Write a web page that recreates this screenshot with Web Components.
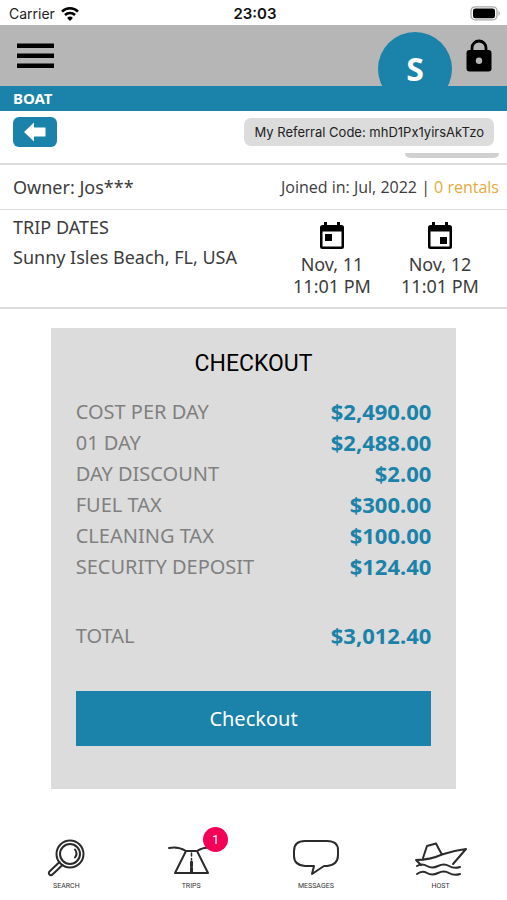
<!DOCTYPE html>
<html lang="en">
<head>
<meta charset="utf-8">
<meta name="viewport" content="width=device-width, initial-scale=1">
<title>Boat checkout</title>
<style>
    :root {
        --brand: #1b82a9;
        --bar: #b6b6b6;
        --panel: #dcdcdc;
        --line: #dddddd;
        --ink: #3c3c3c;
        --muted: #808080;
        --gold: #e5a93c;
        --alert: #f50057;
    }
    body {
        margin: 0;
        background: #fff;
        color: var(--ink);
        font-family: "Noto Sans", "Open Sans", sans-serif;
    }
    boat-app {
        min-height: 100vh;
    }
</style>
</head>
<body>
<boat-app>
    <status-bar slot="top" carrier="Carrier" time="23:03"></status-bar>
    <app-header slot="top" initial="S"></app-header>
    <page-title slot="top">BOAT</page-title>
    <referral-row code="mhD1Px1yirsAkTzo"></referral-row>
    <owner-row name="Jos***" joined="Jul, 2022" rentals="0 rentals"></owner-row>
    <trip-dates place="Sunny Isles Beach, FL, USA">
        <trip-day day="Nov, 11" time="11:01 PM"></trip-day>
        <trip-day day="Nov, 12" time="11:01 PM" end></trip-day>
    </trip-dates>
    <checkout-card></checkout-card>
    <tab-bar slot="bottom">
        <tab-item icon="search">SEARCH</tab-item>
        <tab-item icon="trips" badge="1">TRIPS</tab-item>
        <tab-item icon="messages">MESSAGES</tab-item>
        <tab-item icon="host">HOST</tab-item>
    </tab-bar>
</boat-app>

<script>
class BoatApp extends HTMLElement {
    constructor() {
        super();
        this.attachShadow({ mode: 'open' }).innerHTML = `
            <style>
                :host { display: flex; flex-direction: column; }
                main { flex: 1; }
            </style>
            <slot name="top"></slot>
            <main><slot></slot></main>
            <slot name="bottom"></slot>
        `;
    }
}

class StatusBar extends HTMLElement {
    connectedCallback() {
        this.attachShadow({ mode: 'open' }).innerHTML = `
            <style>
                :host {
                    display: grid;
                    grid-template-columns: 1fr auto 1fr;
                    align-items: center;
                    height: 25px;
                    padding: 2px 6px 0 9px;
                    box-sizing: border-box;
                    color: #222;
                    font: 14px/20px Inter, "Liberation Sans", sans-serif;
                }
                .left { display: flex; align-items: center; gap: 6px; }
                strong { font-size: 15px; font-weight: 600; color: #111; }
                .battery { justify-self: end; }
                svg { display: block; }
            </style>
            <span class="left">${this.getAttribute('carrier')}
                <svg width="18" height="14" viewBox="0 0 18 14" fill="none" stroke="#000" stroke-width="2.6">
                    <path d="M1 4.600a11.400 11.400 0 0 1 16 0M4 8a7.200 7.200 0 0 1 10 0"/>
                    <path d="M9 14 6.100 10.900a4.200 4.200 0 0 1 5.800 0z" fill="#000" stroke="none"/>
                </svg>
            </span>
            <strong>${this.getAttribute('time')}</strong>
            <svg class="battery" width="31" height="15" viewBox="0 0 31 15">
                <rect x="1" y=".8" width="26" height="13" rx="4" fill="#fff" stroke="#a8a8a8" stroke-width="1.300"/>
                <rect x="3" y="2.600" width="22" height="9.600" rx="2.300"/>
                <path d="M28.500 5v5c1.800-.8 1.800-4.200 0-5z" fill="#a8a8a8"/>
            </svg>
        `;
    }
}

class AppHeader extends HTMLElement {
    connectedCallback() {
        this.attachShadow({ mode: 'open' }).innerHTML = `
            <style>
                :host {
                    display: flex;
                    align-items: center;
                    justify-content: space-between;
                    height: 61px;
                    padding: 0 14px 0 16px;
                    position: relative;
                    background: var(--bar);
                }
                button { border: 0; padding: 0; background: none; font: inherit; }
                svg { display: block; }
                /* hangs over the title bar below */
                .avatar {
                    position: absolute;
                    top: 7px;
                    right: 55px;
                    width: 74px;
                    height: 74px;
                    border-radius: 50%;
                    background: var(--brand);
                    color: #fff;
                    font-size: 32px;
                    font-weight: 700;
                    line-height: 72px;
                }
            </style>
            <button aria-label="Menu">
                <svg width="38" height="28" viewBox="0 0 38 28"><path d="M1 1.500h37v4.500H1zM1 11.500h37v4.500H1zM1 21.500h37v4.500H1z"/></svg>
            </button>
            <button class="avatar" aria-label="Profile">${this.getAttribute('initial')}</button>
            <button aria-label="Lock">
                <svg width="28" height="34" viewBox="0 0 28 34">
                    <path d="M7 14V9a7 7 0 0 1 14 0V14" fill="none" stroke="#000" stroke-width="2.800"/>
                    <rect x="1.500" y="11" width="25" height="21.500" rx="3"/>
                    <circle cx="14" cy="21.800" r="3.200" fill="#b6b6b6"/>
                </svg>
            </button>
        `;
    }
}

class PageTitle extends HTMLElement {
    constructor() {
        super();
        this.attachShadow({ mode: 'open' }).innerHTML = `
            <style>
                :host { display: block; padding: 0 13px; background: var(--brand); color: #fff; }
                h1 { margin: 0; font-size: 15px; line-height: 25px; font-weight: 700; }
            </style>
            <h1><slot></slot></h1>
        `;
    }
}

class ReferralRow extends HTMLElement {
    connectedCallback() {
        this.attachShadow({ mode: 'open' }).innerHTML = `
            <style>
                :host { display: block; border-bottom: 2px solid var(--line); }
                .row {
                    display: flex;
                    justify-content: space-between;
                    align-items: center;
                    padding: 6px 13px 0;
                }
                .back {
                    display: grid;
                    place-items: center;
                    width: 44px;
                    height: 30px;
                    border: 0;
                    border-radius: 6px;
                    padding: 0;
                    background: var(--brand);
                }
                .code {
                    padding: 0 10px;
                    border-radius: 7px;
                    background: var(--panel);
                    color: #222;
                    font: 13px/28px Inter, "Liberation Sans", sans-serif;
                    white-space: nowrap;
                }
                .tab {
                    width: 94px;
                    height: 5px;
                    margin: 6px 8px 5px auto;
                    border-radius: 0 0 6px 6px;
                    background: #d0d0d0;
                }
            </style>
            <div class="row">
                <button class="back" aria-label="Back">
                    <svg width="22" height="20" viewBox="0 0 22 20" fill="#fff"><path d="M0 10 10 .5v5h11.500v9H10v5z"/></svg>
                </button>
                <span class="code">My Referral Code: ${this.getAttribute('code')}</span>
            </div>
            <div class="tab"></div>
        `;
    }
}

class OwnerRow extends HTMLElement {
    connectedCallback() {
        this.attachShadow({ mode: 'open' }).innerHTML = `
            <style>
                :host {
                    display: flex;
                    justify-content: space-between;
                    padding: 0 8px 0 13px;
                    border-bottom: 1px solid var(--line);
                    line-height: 44px;
                    white-space: nowrap;
                }
                .owner { font-size: 18px; }
                .joined { font-family: "Open Sans", "Noto Sans", sans-serif; font-size: 16px; }
                a { color: var(--gold); text-decoration: none; }
            </style>
            <span class="owner">Owner: ${this.getAttribute('name')}</span>
            <span class="joined">Joined in: ${this.getAttribute('joined')} | <a href="#rentals">${this.getAttribute('rentals')}</a></span>
        `;
    }
}

class TripDates extends HTMLElement {
    connectedCallback() {
        this.attachShadow({ mode: 'open' }).innerHTML = `
            <style>
                :host {
                    display: flex;
                    justify-content: space-between;
                    padding: 2px 21px 10px 13px;
                    border-bottom: 2px solid var(--line);
                }
                h2, p { margin: 0; font-size: 18px; line-height: 30px; font-weight: 400; }
                .days { display: flex; gap: 16px; padding-top: 10px; }
            </style>
            <div>
                <h2>TRIP DATES</h2>
                <p>${this.getAttribute('place')}</p>
            </div>
            <div class="days"><slot></slot></div>
        `;
    }
}

class TripDay extends HTMLElement {
    connectedCallback() {
        const mark = this.hasAttribute('end') ? 'M13 15h7v7h-7z' : 'M6 12h7v7H6z';
        this.attachShadow({ mode: 'open' }).innerHTML = `
            <style>
                :host {
                    display: flex;
                    flex-direction: column;
                    align-items: center;
                    width: 92px;
                    font-size: 18px;
                    line-height: 22px;
                }
                svg { margin-bottom: 3px; }
            </style>
            <svg width="26" height="28" viewBox="0 0 26 28">
                <path fill-rule="evenodd" d="M5 0h3v3h10V0h3v3h1.500A2.500 2.500 0 0 1 25 5.500v19a2.500 2.500 0 0 1-2.500 2.500h-19A2.500 2.500 0 0 1 1 24.500v-19A2.500 2.500 0 0 1 3.500 3H5zM3.500 9.500v15h19v-15z"/>
                <path d="${mark}"/>
            </svg>
            <span>${this.getAttribute('day')}</span>
            <span>${this.getAttribute('time')}</span>
        `;
    }
}

class CheckoutCard extends HTMLElement {
    connectedCallback() {
        const costs = [
            ['COST PER DAY', '$2,490.00'],
            ['01 DAY', '$2,488.00'],
            ['DAY DISCOUNT', '$2.00'],
            ['FUEL TAX', '$300.00'],
            ['CLEANING TAX', '$100.00'],
            ['SECURITY DEPOSIT', '$124.40']
        ];
        const row = ([label, value]) => `<tr><th scope="row">${label}</th><td>${value}</td></tr>`;

        this.attachShadow({ mode: 'open' }).innerHTML = `
            <style>
                :host {
                    display: block;
                    margin: 19px 10% 0;
                    padding: 20px 25px 43px;
                    background: var(--panel);
                }
                h2 {
                    margin: 0 0 16px;
                    color: #000;
                    font: 400 23px/32px Roboto, "Noto Sans", sans-serif;
                    text-align: center;
                }
                table { width: 100%; border-collapse: collapse; line-height: 31px; }
                th { padding: 0; color: var(--muted); font-size: 20px; font-weight: 400; text-align: left; white-space: nowrap; }
                td { padding: 0; color: var(--brand); font-size: 22px; font-weight: 700; text-align: right; }
                tfoot th, tfoot td { padding-top: 38px; }
                button {
                    display: block;
                    width: 100%;
                    height: 55px;
                    margin-top: 40px;
                    border: 0;
                    background: var(--brand);
                    color: #fff;
                    font: 20px "Noto Sans", sans-serif;
                }
            </style>
            <h2>CHECKOUT</h2>
            <table>
                <tbody>${costs.map(row).join('')}</tbody>
                <tfoot>${row(['TOTAL', '$3,012.40'])}</tfoot>
            </table>
            <button>Checkout</button>
        `;
    }
}

class TabBar extends HTMLElement {
    constructor() {
        super();
        this.attachShadow({ mode: 'open' }).innerHTML = `
            <style>
                :host { display: block; }
                nav { display: grid; grid-template-columns: repeat(4, 1fr); padding: 0 4px 9px; }
            </style>
            <nav><slot></slot></nav>
        `;
    }
}

const TAB_ICONS = {
    search: `
        <circle cx="35" cy="16" r="13.500"/>
        <circle cx="35" cy="16" r="10"/>
        <path d="M40 11.500q3 4 0 8"/>
        <path d="M24.500 24 14.500 33.500a2 2 0 0 0 0 3 2 2 0 0 0 3 0L27.500 27"/>`,
    trips: `
        <path d="M9 10q9-2 17 3h11q8-5 16-3M26 13 15 35h33L37 13"/>
        <path d="M31.500 15v3M31.500 20.500v1.500" stroke-width="1.500"/>
        <path d="M31.500 24v4M31.500 30v4" stroke-width="3"/>`,
    messages: `
        <path d="M20 3h22q11 0 11 9v5q0 10-11 11h-3l-12 8 2-8h-9Q9 27 9 18v-5Q9 3 20 3z"/>`,
    host: `
        <path d="M6 22q14 0 26-5.500 12-4 24-5.500L43 26M6 22l5 5M13 20l4-12 9-2.500q3 6 6 11"/>
        <path d="M7 28q5-3 10 0t11 0 11 0 11 1"/>
        <path d="M7 36q5-4 10-1t11 0 11 0 11 1"/>`
};

class TabItem extends HTMLElement {
    connectedCallback() {
        const badge = this.getAttribute('badge');
        this.attachShadow({ mode: 'open' }).innerHTML = `
            <style>
                :host { display: block; }
                a {
                    display: flex;
                    flex-direction: column;
                    align-items: center;
                    color: #333;
                    font: 7px/10px Roboto, "Noto Sans", sans-serif;
                    text-decoration: none;
                }
                .icon { position: relative; display: block; height: 43px; }
                svg { display: block; }
                .badge {
                    position: absolute;
                    top: -11px;
                    right: -6px;
                    width: 25px;
                    height: 25px;
                    border-radius: 50%;
                    background: var(--alert);
                    color: #fff;
                    font: 13px/25px Roboto, sans-serif;
                    text-align: center;
                }
            </style>
            <a href="#${this.getAttribute('icon')}">
                <span class="icon">
                    <svg width="62" height="40" viewBox="0 0 62 40" fill="none" stroke="#2b2b2b" stroke-width="2" stroke-linejoin="round" stroke-linecap="round">${TAB_ICONS[this.getAttribute('icon')]}</svg>
                    ${badge ? `<span class="badge">${badge}</span>` : ''}
                </span>
                <slot></slot>
            </a>
        `;
    }
}

customElements.define('boat-app', BoatApp);
customElements.define('status-bar', StatusBar);
customElements.define('app-header', AppHeader);
customElements.define('page-title', PageTitle);
customElements.define('referral-row', ReferralRow);
customElements.define('owner-row', OwnerRow);
customElements.define('trip-dates', TripDates);
customElements.define('trip-day', TripDay);
customElements.define('checkout-card', CheckoutCard);
customElements.define('tab-bar', TabBar);
customElements.define('tab-item', TabItem);
</script>
</body>
</html>
